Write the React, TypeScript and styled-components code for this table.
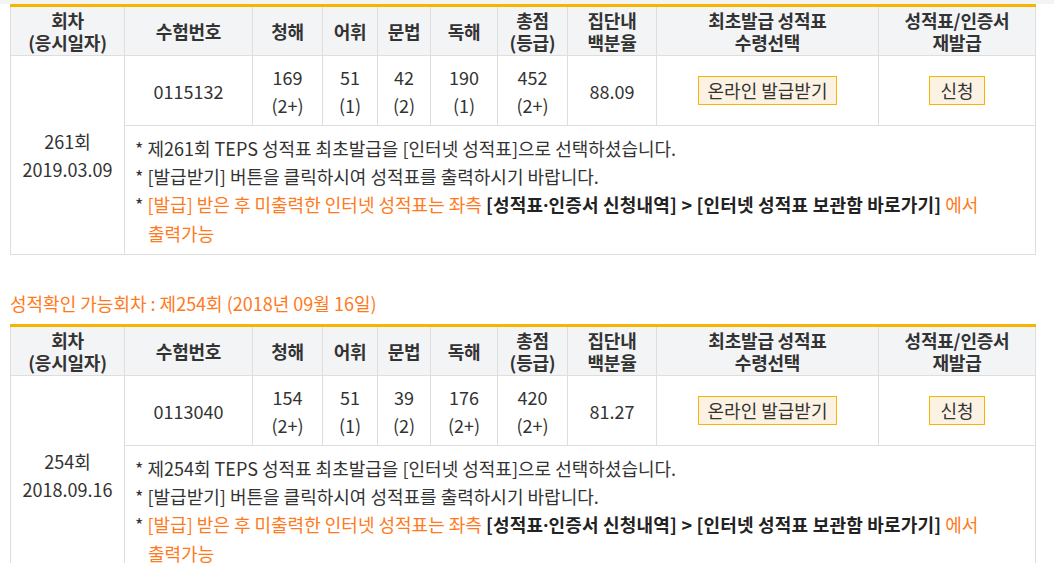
import React from "react";
import styled, { createGlobalStyle } from "styled-components";

const GlobalStyle = createGlobalStyle`
  html, body { margin: 0; padding: 0; background: #fff; }
  body { font-family: "Noto Sans CJK KR", "Noto Sans", sans-serif; color: #333; }
`;

const Page = styled.div`
  width: 1054px;
  overflow: hidden;
`;

const TopStrip = styled.div`
  height: 4px;
  background: #f4f4f5;
`;

const Content = styled.div`
  padding: 0 19px 0 10px;
`;

const Table = styled.table`
  width: 1025px;
  border-collapse: collapse;
  table-layout: fixed;
  border-top: 3px solid #f8b500;
  font-size: 18px;
`;

const HeadCell = styled.th`
  background: #f3f4f6;
  border: 1px solid #dedede;
  border-top: none;
  font-weight: 700;
  color: #333;
  line-height: 22px;
  height: 48px;
  padding: 0;
  text-align: center;
  vertical-align: middle;
  letter-spacing: -0.2px;
`;

const Cell = styled.td`
  border: 1px solid #dedede;
  line-height: 28px;
  height: 69px;
  padding: 0;
  text-align: center;
  vertical-align: middle;
  color: #333;
`;

const NotesCell = styled.td`
  border: 1px solid #dedede;
  line-height: 28px;
  padding: 8px 30px 7px 10px;
  text-align: left;
  vertical-align: top;
  color: #333;
  word-break: keep-all;
`;

const Note = styled.p<{ $accent?: boolean }>`
  margin: 0;
  padding-left: 13px;
  text-indent: -13px;
  color: ${(p) => (p.$accent ? "#ff7a1c" : "#333")};
`;

const Star = styled.span`
  color: #333;
`;

const Strong = styled.b`
  color: #222;
  font-weight: 700;
  letter-spacing: 0.2px;
`;

const Dot = styled.span`
  font-family: "Noto Sans", sans-serif;
`;

const ActionButton = styled.button<{ $pad: number }>`
  font-family: inherit;
  font-size: 18px;
  color: #333;
  background: #fbf2e3;
  border: 1px solid #f8b500;
  height: 29px;
  padding: 0 ${(p) => p.$pad}px;
  line-height: 27px;
  cursor: pointer;
`;

const Title = styled.h3`
  margin: 36px 0 9px;
  font-size: 18px;
  font-weight: 400;
  line-height: 24px;
  color: #ff7a1c;
`;

type Row = {
  round: string;
  date: string;
  id: string;
  scores: [string, string][];
  percentile: string;
};

const widths = [114, 128, 70, 55, 53, 67, 70, 89, 222, 157];

const headers: string[][] = [
  ["회차", "(응시일자)"],
  ["수험번호"],
  ["청해"],
  ["어휘"],
  ["문법"],
  ["독해"],
  ["총점", "(등급)"],
  ["집단내", "백분율"],
  ["최초발급 성적표", "수령선택"],
  ["성적표/인증서", "재발급"],
];

const ScoreTable: React.FC<{ row: Row }> = ({ row }) => (
  <Table>
    <colgroup>
      {widths.map((w, i) => (
        <col key={i} style={{ width: w }} />
      ))}
    </colgroup>
    <thead>
      <tr>
        {headers.map((h, i) => (
          <HeadCell key={i}>
            {h.map((l, j) => (
              <React.Fragment key={j}>
                {j > 0 && <br />}
                {l}
              </React.Fragment>
            ))}
          </HeadCell>
        ))}
      </tr>
    </thead>
    <tbody>
      <tr>
        <Cell rowSpan={2}>
          {row.round}
          <br />
          {row.date}
        </Cell>
        <Cell>{row.id}</Cell>
        {row.scores.map(([s, g], i) => (
          <Cell key={i}>
            {s}
            <br />
            {g}
          </Cell>
        ))}
        <Cell>{row.percentile}</Cell>
        <Cell>
          <ActionButton $pad={9}>온라인 발급받기</ActionButton>
        </Cell>
        <Cell>
          <ActionButton $pad={10}>신청</ActionButton>
        </Cell>
      </tr>
      <tr>
        <NotesCell colSpan={9}>
          <Note>* 제{row.round} TEPS 성적표 최초발급을 [인터넷 성적표]으로 선택하셨습니다.</Note>
          <Note>* [발급받기] 버튼을 클릭하시여 성적표를 출력하시기 바랍니다.</Note>
          <Note $accent>
            <Star>*</Star> [발급] 받은 후 미출력한 인터넷 성적표는 좌측{" "}
            <Strong>
              [성적표<Dot>·</Dot>인증서 신청내역] &gt; [인터넷 성적표 보관함 바로가기]
            </Strong>{" "}
            에서 출력가능
          </Note>
        </NotesCell>
      </tr>
    </tbody>
  </Table>
);

const rows: Row[] = [
  {
    round: "261회",
    date: "2019.03.09",
    id: "0115132",
    scores: [
      ["169", "(2+)"],
      ["51", "(1)"],
      ["42", "(2)"],
      ["190", "(1)"],
      ["452", "(2+)"],
    ],
    percentile: "88.09",
  },
  {
    round: "254회",
    date: "2018.09.16",
    id: "0113040",
    scores: [
      ["154", "(2+)"],
      ["51", "(1)"],
      ["39", "(2)"],
      ["176", "(2+)"],
      ["420", "(2+)"],
    ],
    percentile: "81.27",
  },
];

export default function App() {
  return (
    <Page>
      <GlobalStyle />
      <TopStrip />
      <Content>
        <ScoreTable row={rows[0]} />
        <Title>성적확인 가능회차 : 제254회 (2018년 09월 16일)</Title>
        <ScoreTable row={rows[1]} />
      </Content>
    </Page>
  );
}
